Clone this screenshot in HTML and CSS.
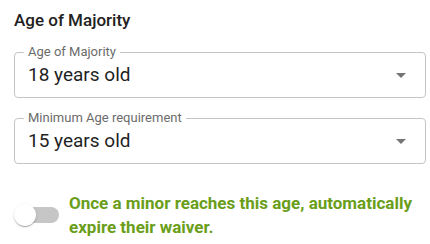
FILE: index.html
```html
<!DOCTYPE html>
<html>
<head>
<meta charset="utf-8">
<link rel="stylesheet" href="styles.css">
</head>
<body>
<div class="panel">
  <h2 class="title">Age of Majority</h2>
  <fieldset class="field">
    <legend class="field-label">Age of Majority</legend>
    <div class="field-row">
      <span class="field-value">18 years old</span>
      <svg class="arrow" width="24" height="24" viewBox="0 0 24 24"><path d="M7 10l5 5 5-5z"/></svg>
    </div>
  </fieldset>
  <fieldset class="field field-second">
    <legend class="field-label">Minimum Age requirement</legend>
    <div class="field-row">
      <span class="field-value">15 years old</span>
      <svg class="arrow" width="24" height="24" viewBox="0 0 24 24"><path d="M7 10l5 5 5-5z"/></svg>
    </div>
  </fieldset>
  <div class="toggle-row">
    <div class="switch">
      <span class="track"></span>
      <span class="thumb"></span>
    </div>
    <p class="toggle-text">Once a minor reaches this age, automatically expire their waiver.</p>
  </div>
</div>
</body>
</html>
```
FILE: styles.css
```css
html, body {
  margin: 0;
  padding: 0;
  background: #ffffff;
}
body {
  font-family: Roboto, "Noto Sans", Arial, sans-serif;
  color: #222222;
}
.panel {
  width: 430px;
  height: 244px;
  padding: 10px 4px 0 14px;
  box-sizing: border-box;
  display: flex;
  flex-direction: column;
}
.title {
  margin: 0;
  font-size: 17px;
  line-height: 20px;
  font-weight: 500;
  color: #212121;
}
.field {
  margin: 15px 0 0 0;
  padding: 4px 13px 11px 13px;
  border: 1px solid #c4c4c4;
  border-radius: 4px;
  min-width: 0;
}
.field-second {
  margin-top: 13px;
}
.field-label {
  margin-left: -4px;
  padding: 0 4px;
  font-size: 13px;
  line-height: 14px;
  color: #6b6b6b;
}
.field-row {
  display: flex;
  align-items: center;
  justify-content: space-between;
  height: 23px;
}
.field-value {
  font-size: 19px;
  line-height: 23px;
  color: #1f1f1f;
}
.arrow {
  fill: #757575;
  margin-right: -1px;
  flex: none;
}
.toggle-row {
  margin-top: 27px;
  display: flex;
  align-items: center;
  gap: 10px;
}
.switch {
  position: relative;
  width: 45px;
  height: 24px;
  flex: none;
}
.track {
  position: absolute;
  left: 8px;
  top: 4px;
  width: 37px;
  height: 16px;
  border-radius: 8px;
  background: #c6c6c6;
}
.thumb {
  position: absolute;
  left: 0;
  top: 1px;
  width: 22px;
  height: 22px;
  border-radius: 50%;
  background: #ffffff;
  box-shadow: 0 2px 1px -1px rgba(0,0,0,0.2), 0 1px 1px 0 rgba(0,0,0,0.14), 0 1px 3px 0 rgba(0,0,0,0.12);
}
.toggle-text {
  margin: 0;
  font-size: 17px;
  line-height: 24px;
  font-weight: 700;
  color: #6a9e1a;
}
```
